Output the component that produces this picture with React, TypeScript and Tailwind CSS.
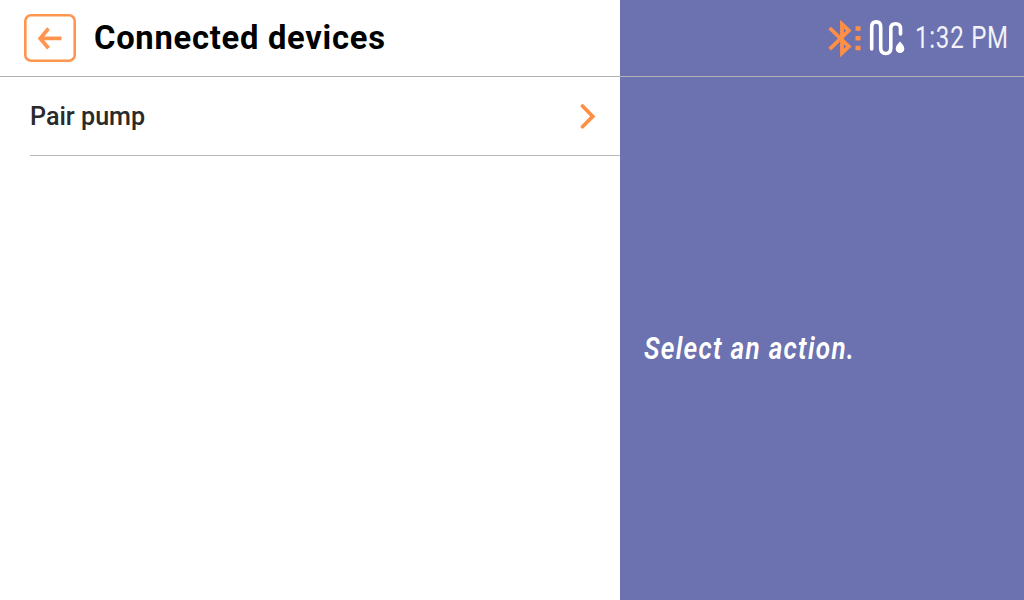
function BackIcon() {
  return (
    <svg width="26" height="24" viewBox="0 0 26 24" fill="none" stroke="#ff9650" strokeWidth="3.8">
      <path d="M24.5 12.4H4M11.5 2.6L3.2 12.4L11.5 22.2" />
    </svg>
  );
}

function BluetoothIcon() {
  return (
    <svg className="shrink-0" width="34" height="38" viewBox="0 0 34 38" fill="none">
      <path
        d="M1.7 9L20.8 27.5L14 34V5.2L20.8 11.6L1.7 30.1"
        stroke="#ff8f45"
        strokeWidth="3.8"
      />
      <path d="M27.5 7.2h5v4.6h-5zM27.5 16.9h5v4.6h-5zM27.5 26.8h5v4.4h-5z" fill="#ff8f45" />
    </svg>
  );
}

function TubingIcon() {
  return (
    <svg width="36" height="38" viewBox="0 0 36 38" fill="none">
      <path
        d="M2.7 30V8C2.7 4.7 4.4 2.9 7.2 2.9S11.7 4.7 11.7 8V29C11.7 32.6 13.5 34.5 16.8 34.5S21.8 32.6 21.8 29V9.5C21.8 6.3 23.5 4.7 26.6 4.7S31.5 6.5 31.5 9.5V15"
        stroke="white"
        strokeWidth="3.6"
        strokeLinecap="round"
      />
      <path d="M31 22.6C33.2 25 35.3 27.2 35.3 29.8A4.3 4.3 0 0 1 26.7 29.8C26.7 27.2 28.8 25 31 22.6Z" fill="white" />
    </svg>
  );
}

export default function App() {
  return (
    <div className="flex h-[600px] w-[1024px] overflow-hidden bg-white font-['Roboto',sans-serif]">
      <main className="flex w-[620px] flex-col">
        <header className="flex h-[77px] items-center border-b border-[#b2b2b2] pl-6">
          <button
            aria-label="Back"
            className="flex h-12 w-[52px] shrink-0 items-center justify-center rounded-[7px] shadow-[inset_0_0_0_2.6px_#ff9650]"
          >
            <BackIcon />
          </button>
          <h1 className="mb-0.5 ml-[18px] origin-left scale-x-[0.963] whitespace-nowrap text-[34px] leading-none font-bold tracking-[0.75px] text-black">
            Connected devices
          </h1>
        </header>
        <button className="ml-[30px] flex h-[79px] items-center justify-between border-b border-[#bbbbbb] pr-6">
          <span className="origin-left scale-x-[0.967] text-[26px] leading-none font-medium text-[#2a2a2a]">
            Pair pump
          </span>
          <svg width="16" height="26" viewBox="0 0 16 26" fill="none">
            <path d="M2.5 3L12.8 13.4L2.5 23.8" stroke="#ff8f45" strokeWidth="3.7" strokeLinecap="round" />
          </svg>
        </button>
      </main>
      <aside className="flex w-[404px] flex-col bg-[#6c71af]">
        <div className="flex h-[77px] items-center border-b border-[#b2b2b2] pl-[208px]">
          <BluetoothIcon />
          <div className="ml-[7px] shrink-0">
            <TubingIcon />
          </div>
          <span className="mb-px ml-[10px] origin-left scale-x-[0.775] whitespace-nowrap text-[31px] leading-none font-[450] tracking-[1px] text-[#f2f2f8]">
            1:32 PM
          </span>
        </div>
        <div className="flex flex-1 items-center pb-[19px] pl-6 text-white">
          <p className="mt-[38px] origin-left scale-x-[0.845] whitespace-nowrap text-[31px] leading-none font-semibold tracking-[1.5px] italic">
            Select an action.
          </p>
        </div>
      </aside>
    </div>
  );
}
